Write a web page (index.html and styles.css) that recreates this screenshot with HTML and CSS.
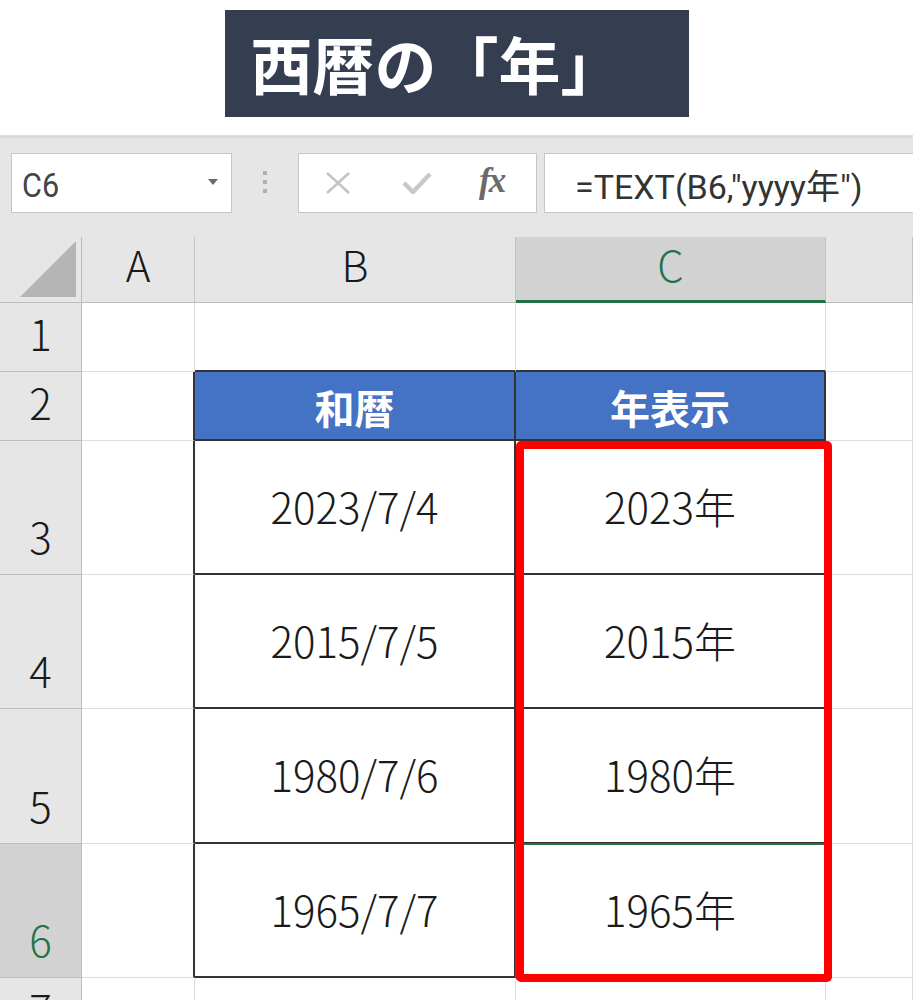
FILE: index.html
```
<!DOCTYPE html>
<html lang="ja">
<head>
<meta charset="utf-8">
<title>西暦の「年」</title>
<link rel="stylesheet" href="styles.css">
</head>
<body>
<div class="title-area">
  <div class="title">西暦の「年」</div>
</div>
<div class="toolbar">
  <div class="namebox">
    <span class="nb-text">C6</span>
    <svg class="caret" width="10" height="6" viewBox="0 0 10 6"><path d="M0 0 L10 0 L5 6 Z" fill="#6b6b6b"/></svg>
  </div>
  <div class="dots"><i></i><i></i><i></i></div>
  <div class="fbtns">
    <svg class="ico-x" width="26" height="22" viewBox="0 0 26 22"><path d="M2 1 L24 21 M24 1 L2 21" stroke="#c4c4c4" stroke-width="2.6" fill="none"/></svg>
    <svg class="ico-check" width="30" height="24" viewBox="0 0 30 24"><path d="M2 12 L11 21 L28 3" stroke="#c8c8c8" stroke-width="4.5" fill="none" stroke-linejoin="round"/></svg>
    <span class="fx">fx</span>
  </div>
  <div class="formula"><span class="f-text">=TEXT(B6,"yyyy年")</span></div>
</div>
<div class="sheet">
  <!-- header row -->
  <div class="hd corner"><svg width="56" height="56" viewBox="0 0 56 56"><path d="M56 0 L56 56 L0 56 Z" fill="#b5b5b5"/></svg></div>
  <div class="hd col">A</div>
  <div class="hd col">B</div>
  <div class="hd col sel-col">C</div>
  <div class="hd col"></div>

  <!-- row 1 -->
  <div class="hd row">1</div>
  <div class="c"></div>
  <div class="c edgeB"></div>
  <div class="c edgeB"></div>
  <div class="c"></div>

  <!-- row 2 -->
  <div class="hd row">2</div>
  <div class="c edgeR"></div>
  <div class="c t th">和暦</div>
  <div class="c t th">年表示</div>
  <div class="c"></div>

  <!-- row 3 -->
  <div class="hd row">3</div>
  <div class="c edgeR"></div>
  <div class="c t td">2023/7/4</div>
  <div class="c t td">2023年</div>
  <div class="c"></div>

  <!-- row 4 -->
  <div class="hd row">4</div>
  <div class="c edgeR"></div>
  <div class="c t td">2015/7/5</div>
  <div class="c t td">2015年</div>
  <div class="c"></div>

  <!-- row 5 -->
  <div class="hd row">5</div>
  <div class="c edgeR"></div>
  <div class="c t td">1980/7/6</div>
  <div class="c t td">1980年</div>
  <div class="c"></div>

  <!-- row 6 -->
  <div class="hd row sel-row">6</div>
  <div class="c edgeR"></div>
  <div class="c t td">1965/7/7</div>
  <div class="c t td selected">1965年</div>
  <div class="c"></div>

  <!-- row 7 -->
  <div class="hd row">7</div>
  <div class="c"></div>
  <div class="c"></div>
  <div class="c"></div>
  <div class="c"></div>

  <div class="redbox"></div>
</div>
</body>
</html>
```
FILE: styles.css
```
* { box-sizing: border-box; }
html, body { margin: 0; padding: 0; background: #fff; }
body {
  width: 913px;
  height: 1000px;
  overflow: hidden;
  font-family: "Noto Sans CJK JP", sans-serif;
}

.title-area {
  height: 135px;
  display: flex;
  justify-content: center;
  padding-top: 10px;
  background: #fff;
}
.title {
  width: 464px;
  height: 107px;
  background: #343e50;
  color: #fff;
  font-weight: 700;
  font-size: 62px;
  line-height: 107px;
  padding-left: 26px;
  white-space: nowrap;
  letter-spacing: 0;
}

.toolbar {
  height: 102px;
  background: #e6e6e6;
  border-top: 1px solid #dcdcdc;
  box-shadow: inset 0 3px 3px -2px #d0d0d0;
  display: flex;
  align-items: flex-start;
  padding-top: 17px;
  padding-left: 11px;
  font-family: Roboto, "Noto Sans CJK JP", sans-serif;
}
.namebox {
  width: 221px;
  height: 60px;
  background: #fff;
  border: 1px solid #c6c6c6;
  display: flex;
  align-items: center;
  justify-content: space-between;
  padding: 4px 13px 0 10px;
}
.nb-text {
  font-size: 34px;
  color: #444;
  display: inline-block;
  transform: scaleX(0.9);
  transform-origin: left center;
}
.caret { margin-top: -6px; }

.dots {
  width: 66px;
  height: 60px;
  display: flex;
  flex-direction: column;
  align-items: center;
  justify-content: center;
  gap: 5px;
  padding-bottom: 3px;
}
.dots i {
  display: block;
  width: 4px;
  height: 4px;
  background: #b0b0b0;
}

.fbtns {
  width: 239px;
  height: 60px;
  background: #fff;
  border: 1px solid #c6c6c6;
  display: flex;
  align-items: center;
  padding-left: 26px;
}
.ico-check { margin-left: 51px; }
.fx {
  margin-left: 47px;
  font-family: "Liberation Serif", serif;
  font-style: italic;
  font-weight: 700;
  font-size: 35px;
  color: #6a6a6a;
  letter-spacing: -2px;
  margin-top: -4px;
}

.formula {
  flex: 1;
  margin-left: 7px;
  height: 60px;
  background: #fff;
  border: 1px solid #c6c6c6;
  border-right: none;
  display: flex;
  align-items: center;
  padding: 3px 0 0 30px;
  white-space: nowrap;
}
.f-text {
  font-size: 34px;
  color: #333;
}

.sheet {
  position: relative;
  display: grid;
  grid-template-columns: 82px 113px 321px 310px 1fr;
  grid-template-rows: 66px 69px 69px 134px 134px 135px 134px 69px;
  background: #fff;
  font-family: "Noto Sans CJK JP", sans-serif;
  font-weight: 300;
  font-size: 42px;
  color: #1a1a1a;
}

.hd {
  background: #e6e6e6;
  border-right: 1px solid #c4c4c4;
  border-bottom: 1px solid #bdbdbd;
  display: flex;
  justify-content: center;
  align-items: flex-end;
  line-height: 1;
  padding-bottom: 17px;
  color: #1a1a1a;
}
.hd.corner {
  justify-content: flex-end;
  padding: 0 5px 5px 0;
  border-right: 1px solid #bdbdbd;
}
.hd.corner svg { display: block; }
.hd.row { border-right: 1px solid #bdbdbd; }
.sel-col {
  background: #d2d2d2;
  color: #217346;
  border-bottom: 3px solid #217346;
  padding-bottom: 15px;
}
.sel-row {
  background: #d2d2d2;
  color: #217346;
  border-right: 2px solid #217346;
}

.c {
  border-right: 1px solid #dcdcdc;
  border-bottom: 1px solid #dcdcdc;
  display: flex;
  justify-content: center;
  align-items: center;
}
.edgeR { border-right: 2px solid #333; }
.edgeB { border-bottom: 2px solid #333; }
.t {
  border-right: 2px solid #333;
  border-bottom: 2px solid #333;
}
.th {
  background: #4472c4;
  color: #fff;
  font-weight: 700;
  font-size: 40px;
  padding-top: 2px;
}
.td {
  color: #1a1a1a;
  padding-bottom: 4px;
}
.selected {
  outline: 2px solid #217346;
  outline-offset: -1px;
}

.redbox {
  position: absolute;
  left: 516px;
  top: 204px;
  width: 316px;
  height: 541px;
  border: 8px solid #ff0000;
  border-radius: 5px;
  pointer-events: none;
}
```
